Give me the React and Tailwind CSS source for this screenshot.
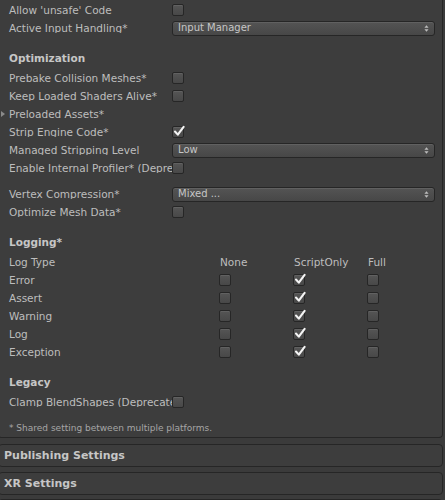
import React from 'react';

// Kotak centang gaya Unity (tema gelap)
const Check = ({ on }) => (
  <span className="w-[12px] h-[12px] rounded-[2px] border border-[#262626] bg-gradient-to-b from-[#555555] to-[#484848] shadow-[inset_0_1px_0_rgba(255,255,255,0.08)] flex items-center justify-center shrink-0 relative">
    {on && (
      <svg viewBox="0 0 12 12" className="absolute left-[0px] -top-[2px] w-[12px] h-[12px]">
        <path d="M2 6.5 L4.8 9.6 L10.6 1.8" fill="none" stroke="#f4f4f4" strokeWidth="2.1" strokeLinecap="round" strokeLinejoin="round" />
      </svg>
    )}
  </span>
);

// Dropdown dengan panah atas-bawah
const Popup = ({ value }) => (
  <div className="w-[263px] h-[15px] rounded-[3px] border border-[#262626] bg-gradient-to-b from-[#545454] to-[#474747] shadow-[inset_0_1px_0_rgba(255,255,255,0.08)] flex items-center justify-between pl-[5px] pr-[5px]">
    <span className="text-[10px] text-[#c6c6c6] leading-none">{value}</span>
    <svg viewBox="0 0 6 10" className="w-[5px] h-[9px]">
      <path d="M0.5 4 L3 1 L5.5 4 Z M0.5 6 L3 9 L5.5 6 Z" fill="#bdbdbd" />
    </svg>
  </div>
);

const Row = ({ label, children, arrow }) => (
  <div className="h-[18px] flex items-center relative">
    {arrow && (
      <svg viewBox="0 0 4 6" className="absolute left-0 top-[6px] w-[4px] h-[6px]">
        <path d="M0 0 L4 3 L0 6 Z" fill="#8a8a8a" />
      </svg>
    )}
    <div className="w-[171px] pl-[8px] overflow-hidden whitespace-nowrap shrink-0">{label}</div>
    {children}
  </div>
);

const Header = ({ children }) => (
  <div className="h-[18px] flex items-center pl-[8px] font-bold text-[#c6c6c6]">{children}</div>
);

const logRows = ['Error', 'Assert', 'Warning', 'Log', 'Exception'];

export default function App() {
  return (
    <div
      className="w-[445px] h-[500px] overflow-hidden bg-[#3b3b3b] text-[#bdbdbd] text-[10.5px] leading-none"
      style={{ fontFamily: '"DejaVu Sans", "Liberation Sans", sans-serif' }}
    >
      {/* panel utama */}
      <div className="-ml-[2px] w-[445px] bg-[#3d3d3d] border-x border-b border-[#262626] rounded-b-[4px] pt-[1px] pl-[2px]">
        <Row label="Allow 'unsafe' Code"><Check /></Row>
        <Row label="Active Input Handling*"><Popup value="Input Manager" /></Row>
        <div className="h-[12px]" />
        <Header>Optimization</Header>
        <div className="h-[2px]" />
        <Row label="Prebake Collision Meshes*"><Check /></Row>
        <Row label="Keep Loaded Shaders Alive*"><Check /></Row>
        <Row label="Preloaded Assets*" arrow />
        <Row label="Strip Engine Code*"><Check on /></Row>
        <Row label="Managed Stripping Level"><Popup value="Low" /></Row>
        <Row label="Enable Internal Profiler* (Deprecated)"><Check /></Row>
        <div className="h-[8px]" />
        <Row label="Vertex Compression*"><Popup value="Mixed ..." /></Row>
        <Row label="Optimize Mesh Data*"><Check /></Row>
        <div className="h-[12px]" />
        <Header>Logging*</Header>
        <div className="h-[2px]" />
        <div className="h-[18px] flex items-center pl-[8px]">
          <span className="w-[211px]">Log Type</span>
          <span className="w-[74px]">None</span>
          <span className="w-[74px]">ScriptOnly</span>
          <span>Full</span>
        </div>
        {logRows.map((r) => (
          <div key={r} className="h-[18px] flex items-center pl-[8px]">
            <span className="w-[210px]">{r}</span>
            <span className="w-[74px]"><Check /></span>
            <span className="w-[74px]"><Check on /></span>
            <Check />
          </div>
        ))}
        <div className="h-[12px]" />
        <Header>Legacy</Header>
        <div className="h-[2px]" />
        <Row label="Clamp BlendShapes (Deprecated)*"><Check /></Row>
        <div className="h-[8px]" />
        <div className="h-[18px] flex items-center pl-[8px] text-[9px] text-[#a6a6a6]">* Shared setting between multiple platforms.</div>
      </div>

      {/* bagian terlipat */}
      <div className="mt-[6px] -ml-[2px] w-[445px] h-[23px] bg-[#3d3d3d] border border-[#262626] rounded-[4px] flex items-center pl-[5px] font-bold text-[11px] text-[#c6c6c6]">
        Publishing Settings
      </div>
      <div className="mt-[5px] -ml-[2px] w-[445px] h-[23px] bg-[#3d3d3d] border border-[#262626] rounded-[4px] flex items-center pl-[5px] font-bold text-[11px] text-[#c6c6c6]">
        XR Settings
      </div>
      <div className="mt-[4px] -ml-[2px] w-[445px] h-[23px] bg-[#3d3d3d] border border-[#262626] rounded-[4px]" />
    </div>
  );
}
